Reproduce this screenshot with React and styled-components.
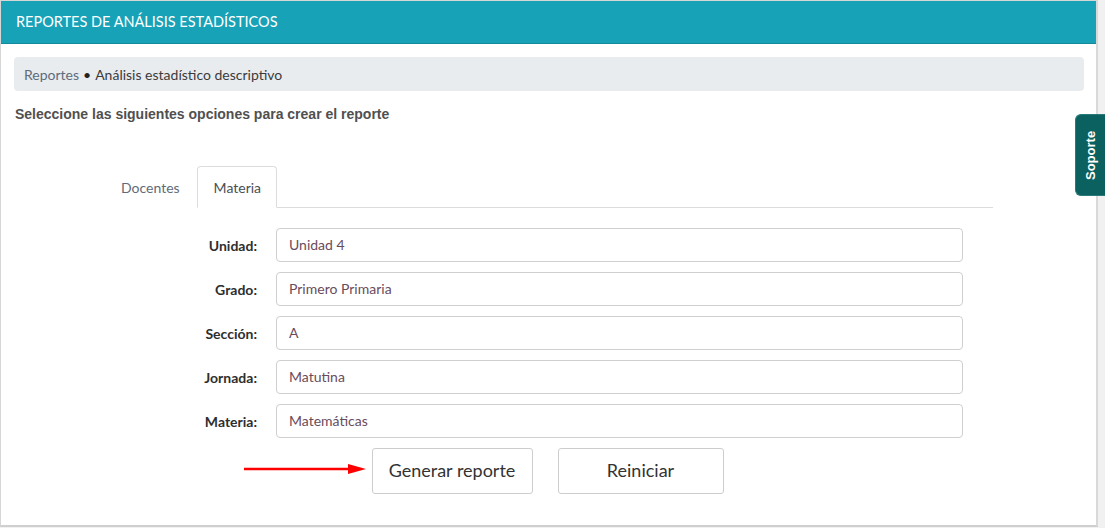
import React from "react"
import styled, { createGlobalStyle } from "styled-components"

const GlobalStyle = createGlobalStyle`
  html, body {
    margin: 0;
    padding: 0;
    background: #f1f1f1;
  }
  body {
    font-family: Lato, "Open Sans", sans-serif;
    overflow: hidden;
  }
`

const fields = [
  { label: "Unidad:", value: "Unidad 4" },
  { label: "Grado:", value: "Primero Primaria" },
  { label: "Sección:", value: "A" },
  { label: "Jornada:", value: "Matutina" },
  { label: "Materia:", value: "Matemáticas" },
]

const App = () => {
  return (
    <Page>
      <GlobalStyle />
      <Card>
        <CardHeader>REPORTES DE ANÁLISIS ESTADÍSTICOS</CardHeader>
        <CardBody>
          <Breadcrumb>
            <CrumbLink>Reportes</CrumbLink>
            <CrumbDot>•</CrumbDot>
            <span>Análisis estadístico descriptivo</span>
          </Breadcrumb>
          <Intro>Seleccione las siguientes opciones para crear el reporte</Intro>
          <Panel>
            <Tabs>
              <Tab>Docentes</Tab>
              <Tab active>Materia</Tab>
            </Tabs>
            <Form>
              {fields.map((f) => (
                <Row key={f.label}>
                  <Label>{f.label}</Label>
                  <Input>{f.value}</Input>
                </Row>
              ))}
            </Form>
            <Actions>
              <ArrowWrap>
                <Arrow width="122" height="12" viewBox="0 0 122 12">
                  <line x1="0" y1="6" x2="108" y2="6" stroke="#f00" strokeWidth="2.5" />
                  <polygon points="104,1 122,6 104,11" fill="#f00" />
                </Arrow>
                <Button>Generar reporte</Button>
              </ArrowWrap>
              <Button wide>Reiniciar</Button>
            </Actions>
          </Panel>
        </CardBody>
      </Card>
      <Support>Soporte</Support>
    </Page>
  )
}

export default App

const Page = styled.div`
  position: relative;
  width: 1105px;
  height: 528px;
`

const Card = styled.div`
  width: 1098px;
  height: 527px;
  box-sizing: border-box;
  background: #fff;
  border: 1px solid #d6d6d6;
  border-right: 2px solid #d9d9d9;
  border-bottom: 2px solid #cfcfcf;
`

const CardHeader = styled.div`
  height: 42px;
  background: #17a2b8;
  border-bottom: 1px solid #128a9c;
  color: #fff;
  font-size: 14.5px;
  line-height: 42px;
  padding-left: 15px;
`

const CardBody = styled.div`
  padding: 13px 12px 0 13px;
`

const Breadcrumb = styled.div`
  height: 34px;
  background: #e9ecef;
  border-radius: 4px;
  display: flex;
  align-items: center;
  padding-left: 10px;
  font-size: 14px;
  color: #3b3b3b;
`

const CrumbLink = styled.span`
  color: #5d6b7b;
`

const CrumbDot = styled.span`
  margin: 0 4px;
  color: #222;
`

const Intro = styled.div`
  margin-top: 15px;
  padding-left: 1px;
  font-family: "Liberation Sans", Arial, sans-serif;
  font-weight: bold;
  font-size: 14px;
  color: #505050;
`

const Panel = styled.div`
  width: 889px;
  margin: 44px 0 0 90px;
`

const Tabs = styled.div`
  display: flex;
  border-bottom: 1px solid #dcdcdc;
  height: 41px;
`

const Tab = styled.div`
  height: 42px;
  box-sizing: border-box;
  padding: 0 ${({ active }) => (active ? "15px 0 16px" : "16px 0 16px")};
  margin-bottom: -1px;
  display: flex;
  align-items: center;
  font-size: 14px;
  border: 1px solid ${({ active }) => (active ? "#dcdcdc" : "transparent")};
  border-bottom-color: ${({ active }) => (active ? "#fff" : "transparent")};
  border-radius: 4px 4px 0 0;
  background: #fff;
  color: ${({ active }) => (active ? "#4a4f55" : "#5f6b78")};
`

const Form = styled.div`
  display: flex;
  flex-direction: column;
  gap: 10px;
  padding-top: 20px;
  padding-right: 30px;
`

const Row = styled.div`
  display: grid;
  grid-template-columns: 153px 1fr;
  column-gap: 19px;
  align-items: center;
`

const Label = styled.div`
  text-align: right;
  font-weight: bold;
  font-size: 14px;
  color: #2e2e2e;
`

const Input = styled.div`
  height: 34px;
  box-sizing: border-box;
  border: 1px solid #cfcfcf;
  border-radius: 4px;
  padding: 0 12px 2px;
  display: flex;
  align-items: center;
  font-size: 14px;
  color: #6a4b5c;
`

const Actions = styled.div`
  display: flex;
  justify-content: center;
  gap: 25px;
  margin-top: 10px;
  padding-right: 2px;
`

const ArrowWrap = styled.div`
  position: relative;
`

const Arrow = styled.svg`
  position: absolute;
  right: calc(100% + 6px);
  top: 15px;
`

const Button = styled.button`
  width: ${({ wide }) => (wide ? "166px" : "161px")};
  height: 46px;
  background: #fff;
  border: 1px solid #cdcdcd;
  border-radius: 3px;
  font-family: Lato, "Open Sans", sans-serif;
  font-size: 18px;
  color: #333;
  padding: 0 0 2px;
`

const Support = styled.div`
  position: absolute;
  top: 114px;
  right: 0;
  width: 30px;
  height: 82px;
  box-sizing: border-box;
  background: #0b6060;
  border: 1px solid #2b7a7a;
  border-left: none;
  border-radius: 0 6px 6px 0;
  color: #fff;
  font-family: "Liberation Sans", Arial, sans-serif;
  font-weight: bold;
  font-size: 13px;
  writing-mode: vertical-rl;
  transform: rotate(180deg);
  display: flex;
  align-items: center;
  justify-content: center;
`
